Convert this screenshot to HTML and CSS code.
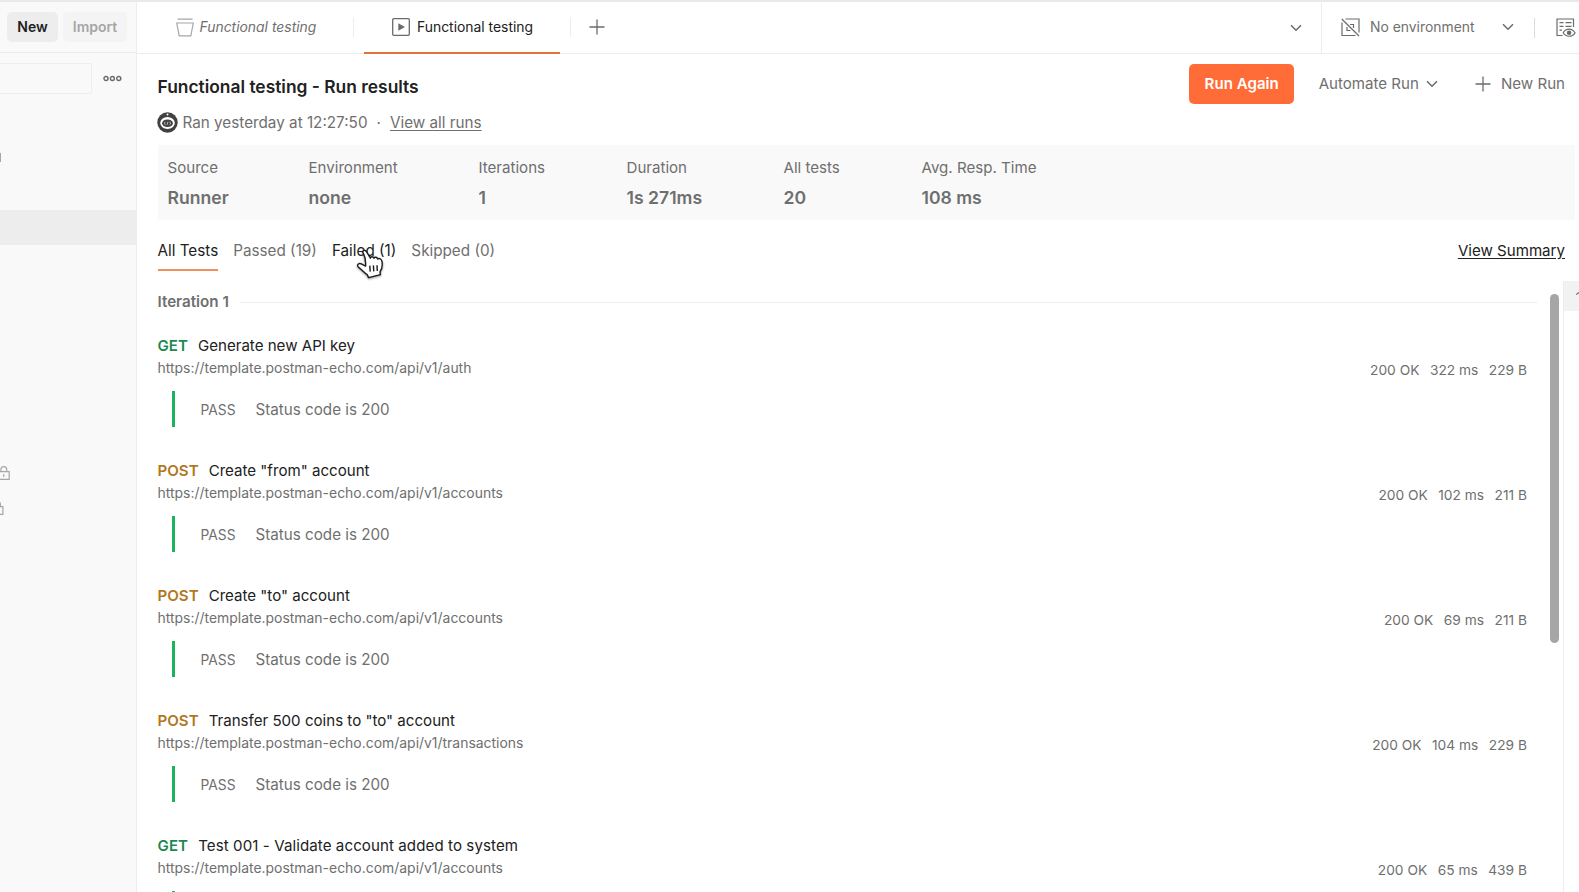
FILE: index.html
```html
<!DOCTYPE html>
<html lang="en">
<head>
    <meta charset="UTF-8">
    <title>Functional testing - Run results</title>
    <link rel="stylesheet" href="styles.css">
</head>
<body>
    <div class="app">
        <aside class="sidebar">
            <div class="sidebar-head">
                <button class="btn-new">New</button>
                <button class="btn-import">Import</button>
            </div>
            <div class="search-row">
                <div class="search"></div>
                <svg class="dots" width="19" height="7" viewBox="0 0 19 7" fill="none" stroke="#6b6b6b" stroke-width="1.4">
                    <circle cx="3" cy="3.5" r="2"/><circle cx="9.4" cy="3.5" r="2"/><circle cx="15.8" cy="3.5" r="2"/>
                </svg>
            </div>
            <div class="marker"></div>
            <div class="selected"></div>
            <svg class="lock" width="11" height="15" viewBox="0 0 11 15" fill="none" stroke="#a6a6a6" stroke-width="1.2">
                <path d="M-1.5 5.6H9.2V13.4H-1.5zM.9 5.4V3.6a2.9 2.9 0 0 1 5.8 0V5.4M3.7 8v3"/>
            </svg>
            <svg class="lock lock-cut" width="11" height="15" viewBox="0 0 11 15" fill="none" stroke="#a6a6a6" stroke-width="1.2">
                <path d="M-8 5.6H2.9V13.4H-8zM.4 5.4V3.6A2.9 2.9 0 0 0-2.5 .7"/>
            </svg>
        </aside>

        <main class="main">
            <header class="topbar">
                <div class="tab tab-preview">
                    <svg width="18" height="19" viewBox="0 0 18 19" fill="none" stroke="#a6a6a6" stroke-width="1.2">
                        <path d="M1.5 1.2H16.5M.7 5H17.3L14.8 17.8H3.2z"/>
                    </svg>
                    <span>Functional testing</span>
                </div>
                <div class="tab tab-active">
                    <svg width="18" height="18" viewBox="0 0 18 18">
                        <rect x=".7" y=".7" width="16.6" height="16.6" rx="1" fill="none" stroke="#6b6b6b" stroke-width="1.3"/>
                        <path d="M6.3 5.2L13 9L6.3 12.8z" fill="#6b6b6b"/>
                    </svg>
                    <span>Functional testing</span>
                </div>
                <div class="tab-add">
                    <svg width="16" height="16" viewBox="0 0 16 16" stroke="#6b6b6b" stroke-width="1.3"><path d="M8 .5V15.5M.5 8H15.5"/></svg>
                </div>
                <svg class="chevron tabs-more" width="12" height="8" viewBox="0 0 12 8"><path d="M1 1.2L6 6.2L11 1.2"/></svg>
                <div class="env">
                    <svg width="19" height="19" viewBox="0 0 19 19" fill="none" stroke="#6b6b6b" stroke-width="1.2">
                        <path d="M.8 1L18 18M4.5 1H18V14.5M1 4.5V17.5H14.5M6 9V12.5H9.5M9 6.5H12.5V10"/>
                    </svg>
                    <span>No environment</span>
                    <svg class="chevron" width="12" height="8" viewBox="0 0 12 8"><path d="M1 1.2L6 6.2L11 1.2"/></svg>
                </div>
                <div class="env-look">
                    <svg width="20" height="20" viewBox="0 0 20 20" fill="none" stroke="#6b6b6b" stroke-width="1.2">
                        <path d="M6.5 17.5H1V1H17.5V9M3.5 4.6H7.5M9.5 4.6H15.5M3.5 8.4H7.5M9.5 8.4H15.5M3.5 12.2H6"/>
                        <path d="M7.2 14.8C10 10 16 10 19 14.8C16 19.4 10 19.4 7.2 14.8z"/>
                        <circle cx="13.1" cy="14.8" r="1.7" fill="#6b6b6b"/>
                    </svg>
                </div>
            </header>

            <section class="run-head">
                <div>
                    <h1>Functional testing - Run results</h1>
                    <div class="ran">
                        <svg width="21" height="21" viewBox="0 0 21 21">
                            <circle cx="10.5" cy="10.5" r="10.2" fill="#414141"/>
                            <circle cx="10.5" cy="2.6" r="1" fill="#fff"/>
                            <ellipse cx="10.5" cy="11" rx="7.3" ry="6" fill="#fff"/>
                            <ellipse cx="10.5" cy="11.3" rx="5.4" ry="3.8" fill="#414141"/>
                            <path d="M8.5 10L7 11.3L8.5 12.6M12.5 10L14 11.3L12.5 12.6M11 9.8L10 12.8" fill="none" stroke="#ddd" stroke-width=".8"/>
                        </svg>
                        <span>Ran yesterday at 12:27:50</span>
                        <span class="sep">·</span>
                        <a class="link">View all runs</a>
                    </div>
                </div>
                <div class="actions">
                    <button class="btn-run">Run Again</button>
                    <div class="automate">
                        <span>Automate Run</span>
                        <svg class="chevron" width="12" height="8" viewBox="0 0 12 8"><path d="M1 1.2L6 6.2L11 1.2"/></svg>
                    </div>
                    <div class="new-run">
                        <svg width="16" height="16" viewBox="0 0 16 16" stroke="#6b6b6b" stroke-width="1.3"><path d="M8 .5V15.5M.5 8H15.5"/></svg>
                        <span>New Run</span>
                    </div>
                </div>
            </section>

            <section class="stats">
                <div><span>Source</span><b>Runner</b></div>
                <div><span>Environment</span><b>none</b></div>
                <div><span>Iterations</span><b>1</b></div>
                <div><span>Duration</span><b>1s 271ms</b></div>
                <div><span>All tests</span><b>20</b></div>
                <div><span>Avg. Resp. Time</span><b>108 ms</b></div>
            </section>

            <nav class="filters">
                <span class="filter current">All Tests</span>
                <span class="filter">Passed (19)</span>
                <span class="filter hovered">Failed (1)
                    <svg class="cursor" width="32" height="34" viewBox="0 0 32 34">
                        <path d="M8.2 4.2C6.7 1.7 9.8.3 11.3 2.5L15.4 9.2C15.6 7.4 18.2 7.3 19 9.2C19.8 7.6 22.2 8 22.8 10C24.5 8.9 26.6 10.2 27 12.6C27.9 17.3 27.1 19.7 25 22.8L25.4 25.6L13.6 28.6L12.2 25.6C9.2 23.9 6.8 20.6 4.3 18.9C1.2 16.8 2.9 14 5.8 14.7L10.6 17.1C10.9 12.5 10 7.4 8.2 4.2z" fill="#fff" stroke="#1c1c1c" stroke-width="1.4" stroke-linejoin="round"/>
                        <path d="M14.8 16.6L15.2 22.6M18.4 16.4L18.8 22.4M22 16.2L22.3 22" stroke="#1c1c1c" stroke-width="1.4" fill="none"/>
                    </svg>
                </span>
                <span class="filter">Skipped (0)</span>
                <a class="summary">View Summary</a>
            </nav>

            <section class="results">
                <div class="list">
                    <div class="iteration"><span>Iteration 1</span></div>

                    <article class="request">
                        <div class="name"><b class="get">GET</b>Generate new API key</div>
                        <div class="meta"><span class="url">https://template.postman-echo.com/api/v1/auth</span><span class="info"><i>200 OK</i><i>322 ms</i><i>229 B</i></span></div>
                        <div class="test"><small>PASS</small><span>Status code is 200</span></div>
                    </article>
                    <article class="request">
                        <div class="name"><b class="post">POST</b>Create "from" account</div>
                        <div class="meta"><span class="url">https://template.postman-echo.com/api/v1/accounts</span><span class="info"><i>200 OK</i><i>102 ms</i><i>211 B</i></span></div>
                        <div class="test"><small>PASS</small><span>Status code is 200</span></div>
                    </article>
                    <article class="request">
                        <div class="name"><b class="post">POST</b>Create "to" account</div>
                        <div class="meta"><span class="url">https://template.postman-echo.com/api/v1/accounts</span><span class="info"><i>200 OK</i><i>69 ms</i><i>211 B</i></span></div>
                        <div class="test"><small>PASS</small><span>Status code is 200</span></div>
                    </article>
                    <article class="request">
                        <div class="name"><b class="post">POST</b>Transfer 500 coins to "to" account</div>
                        <div class="meta"><span class="url">https://template.postman-echo.com/api/v1/transactions</span><span class="info"><i>200 OK</i><i>104 ms</i><i>229 B</i></span></div>
                        <div class="test"><small>PASS</small><span>Status code is 200</span></div>
                    </article>
                    <article class="request">
                        <div class="name name-long"><b class="get">GET</b>Test 001 - Validate account added to system</div>
                        <div class="meta"><span class="url">https://template.postman-echo.com/api/v1/accounts</span><span class="info"><i>200 OK</i><i>65 ms</i><i>439 B</i></span></div>
                        <div class="test"></div>
                    </article>
                </div>
                <div class="track"><div class="thumb"></div></div>
                <div class="rail">
                    <div class="rail-cell">
                        <svg width="3" height="5" viewBox="0 0 3 5" fill="none" stroke="#6b6b6b" stroke-width="1.2"><path d="M.2 2.6L3 .6"/></svg>
                    </div>
                </div>
            </section>
        </main>
    </div>
</body>
</html>
```
FILE: styles.css
```css
* { box-sizing: border-box; }
body {
    margin: 0;
    font-family: Inter, "Liberation Sans", sans-serif;
    font-size: 15.1px;
    line-height: 20px;
    color: #6f6f6f;
    background: #fff;
    overflow: hidden;
}
button {
    border: none;
    border-radius: 5px;
    padding: 0;
    font-family: inherit;
    font-weight: 600;
}
svg { display: block; flex: none; }
.chevron { fill: none; stroke: #6b6b6b; stroke-width: 1.5; }

.app {
    display: flex;
    height: 892px;
    border-top: 2px solid #e9e9e9;
}

/* sidebar */
.sidebar {
    width: 137px;
    flex: none;
    background: #f9f9f9;
    border-right: 1px solid #ededed;
}
.sidebar-head {
    display: flex;
    gap: 5px;
    height: 51px;
    padding: 10px 0 0 7px;
    border-bottom: 1px solid #ededed;
}
.sidebar-head button { height: 30px; padding-bottom: 1px; font-size: 14px; }
.btn-new { width: 51px; background: #ededed; color: #212121; }
.btn-import { width: 64px; background: #f4f4f4; color: #a6a6a6; }
.search-row {
    display: flex;
    align-items: center;
    gap: 11px;
    padding-top: 10px;
}
.search {
    width: 92px;
    height: 31px;
    border: 1px solid #ededed;
    border-left: none;
    border-radius: 0 2px 2px 0;
}
.marker { width: 1px; height: 9px; margin-top: 59px; background: #a6a6a6; }
.selected { height: 35px; margin-top: 48px; background: #ededed; }
.lock { margin-top: 221px; }
.lock-cut { margin-top: 20px; }

/* top bar */
.main {
    flex: 1;
    min-width: 0;
    display: flex;
    flex-direction: column;
}
.topbar {
    display: flex;
    align-items: center;
    height: 52px;
    flex: none;
    border-bottom: 1px solid #ededed;
    font-size: 13.9px;
    white-space: nowrap;
}
.tab {
    display: flex;
    align-items: center;
    height: 52px;
    padding-bottom: 1px;
}
.tab-preview {
    width: 217px;
    gap: 6px;
    padding-left: 38.5px;
    font-style: italic;
}
.tab-preview::after, .tab-add::before {
    content: "";
    width: 1px;
    height: 20px;
    background: #ededed;
}
.tab-preview::after { margin-left: auto; }
.tab-active {
    width: 196px;
    gap: 7px;
    padding-left: 28px;
    margin-left: 10px;
    border-bottom: 2px solid #e0733c;
    padding-bottom: 0;
    color: #212121;
}
.tab-add {
    display: flex;
    align-items: center;
    gap: 18px;
    height: 50px;
    margin-left: 10px;
    padding-bottom: 1px;
}
.tabs-more { margin-left: auto; }
.env {
    display: flex;
    align-items: center;
    width: 213px;
    height: 50px;
    margin-left: 19px;
    padding: 0 0 1px 19px;
    border-left: 1px solid #ededed;
}
.env span { margin: 0 27px 0 10px; }
.env-look {
    height: 20px;
    width: 45px;
    padding-left: 21px;
    border-left: 1px solid #dcdcdc;
}

/* run header */
.run-head {
    display: flex;
    justify-content: space-between;
    height: 91px;
    flex: none;
    padding: 10px 14px 0 20.5px;
}
h1 {
    margin: 13px 0 0;
    font-size: 17.4px;
    line-height: 20px;
    font-weight: 600;
    color: #212121;
}
.ran { display: flex; align-items: center; margin-top: 15px; font-size: 15.25px; }
.ran svg { margin: 0 4.5px 0 -.5px; }
.sep { margin: 0 9px; }
.link, .summary { text-decoration: underline; text-underline-offset: 2px; }
.actions { display: flex; height: 40px; align-items: center; }
.btn-run {
    width: 105px;
    height: 40px;
    padding-bottom: 1px;
    background: #ff6c37;
    color: #fff;
    font-size: 15.1px;
}
.automate { display: flex; align-items: center; gap: 7.5px; margin-left: 24.5px; }
.new-run { display: flex; align-items: center; gap: 10px; margin-left: 36.5px; }

/* stats */
.stats {
    display: grid;
    grid-template-columns: 141px 170px 148px 157px 138px 1fr;
    height: 75px;
    flex: none;
    margin: 0 4px 0 20.5px;
    padding: 13px 0 0 10px;
    background: #f9f9f9;
}
.stats span, .stats b { display: block; }
.stats b { margin-top: 10px; font-size: 17.6px; font-weight: 600; }

/* filters */
.filters {
    display: flex;
    gap: 15px;
    height: 61px;
    flex: none;
    padding: 21px 14px 0 20.5px;
}
.filter { height: 30px; white-space: nowrap; font-size: 15.25px; }
.current { color: #212121; border-bottom: 2px solid #f0905f; }
.hovered { position: relative; color: #212121; }
.cursor {
    position: absolute;
    left: 23px;
    top: 8px;
    filter: drop-shadow(0 1px 1px rgba(0, 0, 0, 0.4));
}
.summary { margin-left: auto; color: #212121; }

/* results */
.results { display: flex; flex: 1; min-height: 0; }
.list { flex: 1; padding: 11px 0 0 20.5px; overflow: hidden; }
.iteration {
    display: flex;
    align-items: center;
    gap: 11px;
    height: 20px;
    margin-right: 13px;
    font-size: 15.2px;
    font-weight: 600;
}
.iteration::after { content: ""; flex: 1; height: 1px; background: #ededed; }
.request { height: 125px; padding: 24px 23px 0 0; }
.name { color: #212121; }
.name-long { letter-spacing: .08px; }
.name b { margin-right: 10px; font-weight: 600; }
.get { color: #1b8a50; }
.post { color: #b0781f; }
.meta {
    display: flex;
    justify-content: space-between;
    margin-top: 2px;
    font-size: 13.95px;
}
.info { display: flex; gap: 10.5px; padding-top: 2px; font-size: 13.75px; }
.info i { font-style: normal; }
.test {
    display: flex;
    align-items: center;
    height: 36px;
    margin: 11px 0 0 14.5px;
    padding: 1px 0 0 25.5px;
    border-left: 3px solid #1db25c;
    font-size: 15.2px;
}
.test small { width: 55px; font-size: 13.8px; }
.track { width: 13px; padding-top: 13px; }
.thumb { width: 9px; height: 349px; border-radius: 5px; background: #a6a6a6; }
.rail { width: 16px; border-left: 1px solid #ededed; }
.rail-cell {
    display: flex;
    justify-content: flex-end;
    height: 30px;
    padding-top: 11px;
    background: #f2f2f2;
}
```
